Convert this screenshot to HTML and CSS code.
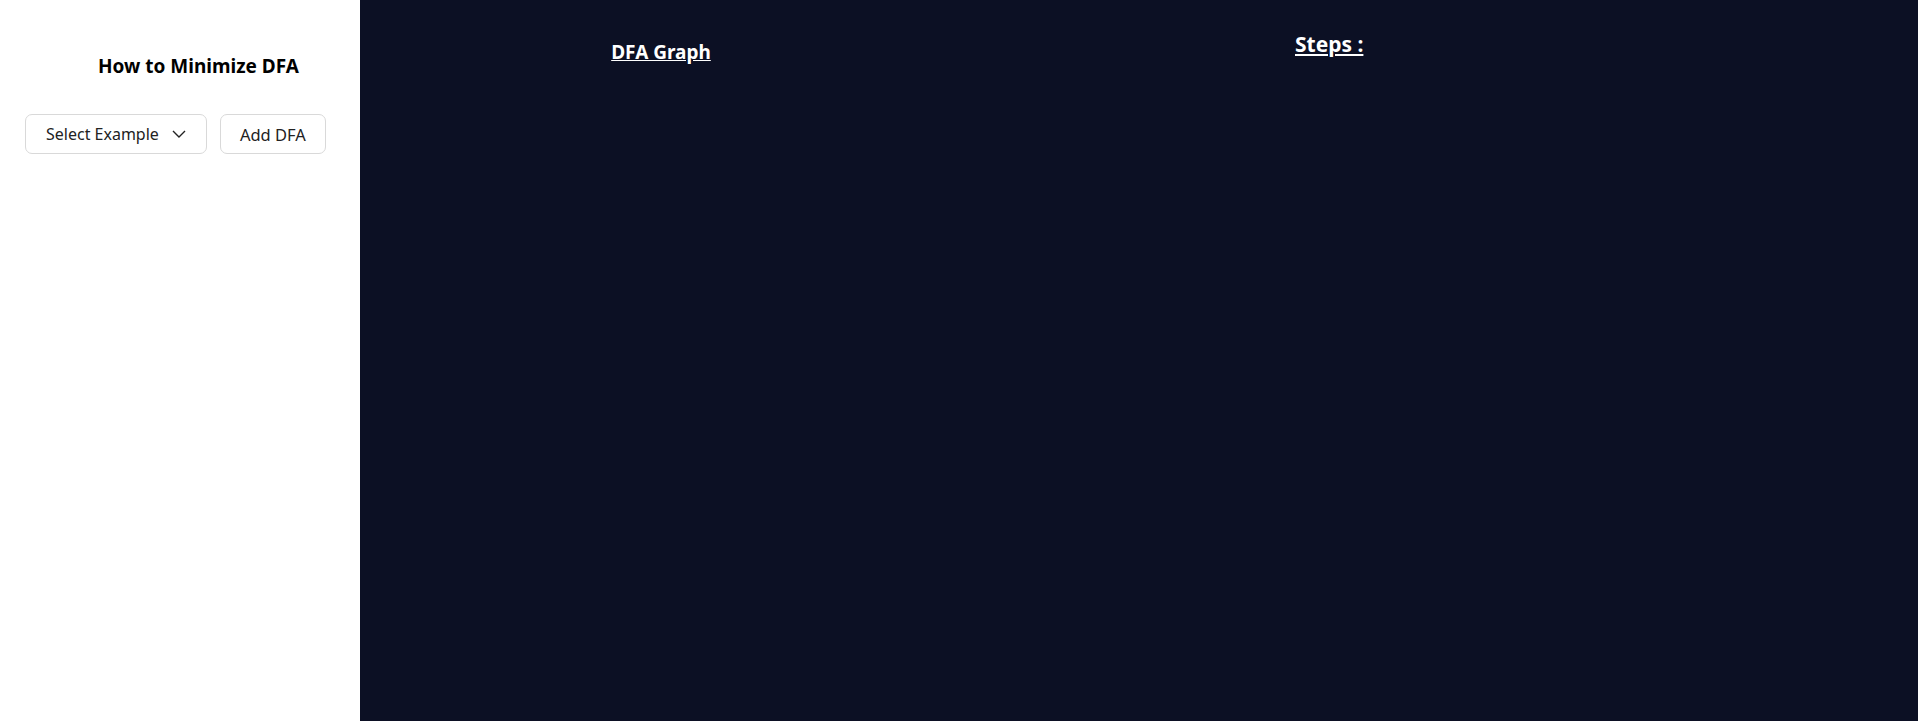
FILE: index.html
```html
<!DOCTYPE html>
<html lang="en">
<head>
<meta charset="utf-8">
<title>How to Minimize DFA</title>
<link rel="stylesheet" href="styles.css">
</head>
<body>
<div class="app">
  <aside class="sidebar">
    <h1 class="title">How to Minimize DFA</h1>
    <div class="controls">
      <button class="btn select-btn" type="button"><span>Select Example</span>
        <svg class="chev" width="14" height="9" viewBox="0 0 14 9" aria-hidden="true"><path d="M1 1l6 6 6-6" fill="none" stroke="#222" stroke-width="1.4"/></svg>
      </button>
      <button class="btn" type="button">Add DFA</button>
    </div>
  </aside>
  <main class="main">
    <section class="graph">
      <h2 class="graph-title">DFA Graph</h2>
    </section>
    <section class="steps">
      <h2 class="steps-title">Steps :</h2>
    </section>
  </main>
</div>
</body>
</html>
```
FILE: styles.css
```css
* { box-sizing: border-box; }
html, body { margin: 0; height: 100%; }
body {
  font-family: "Noto Sans", "Open Sans", sans-serif;
  background: #0c1024;
}
.app {
  display: flex;
  height: 100vh;
}
.sidebar {
  width: 360px;
  flex: none;
  background: #ffffff;
  padding: 52px 25px 0 25px;
}
.title {
  margin: 0 0 34px 0;
  font-size: 19px;
  font-weight: 700;
  color: #000;
  text-align: center;
  padding-left: 37px;
  line-height: 28px;
}
.controls {
  display: flex;
  gap: 13px;
}
.btn {
  height: 40px;
  border: 1px solid #d9d9d9;
  border-radius: 7px;
  background: #fff;
  font-family: inherit;
  font-size: 16.5px;
  color: #222;
  padding: 0 19px;
  display: flex;
  align-items: center;
  gap: 13px;
  white-space: nowrap;
  flex: none;
}
.select-btn { font-size: 16px; padding: 0 20px 0 20px; }
.main {
  flex: 1;
  display: flex;
  color: #fff;
}
.graph {
  width: 602px;
  text-align: center;
  padding-top: 40px;
}
.graph-title {
  margin: 0;
  font-size: 19px;
  font-weight: 700;
  text-decoration: underline;
  line-height: 24px;
}
.steps {
  padding-top: 30px;
  padding-left: 333px;
}
.steps-title {
  margin: 0;
  font-size: 21px;
  font-weight: 700;
  text-decoration: underline;
  line-height: 28px;
}
```
